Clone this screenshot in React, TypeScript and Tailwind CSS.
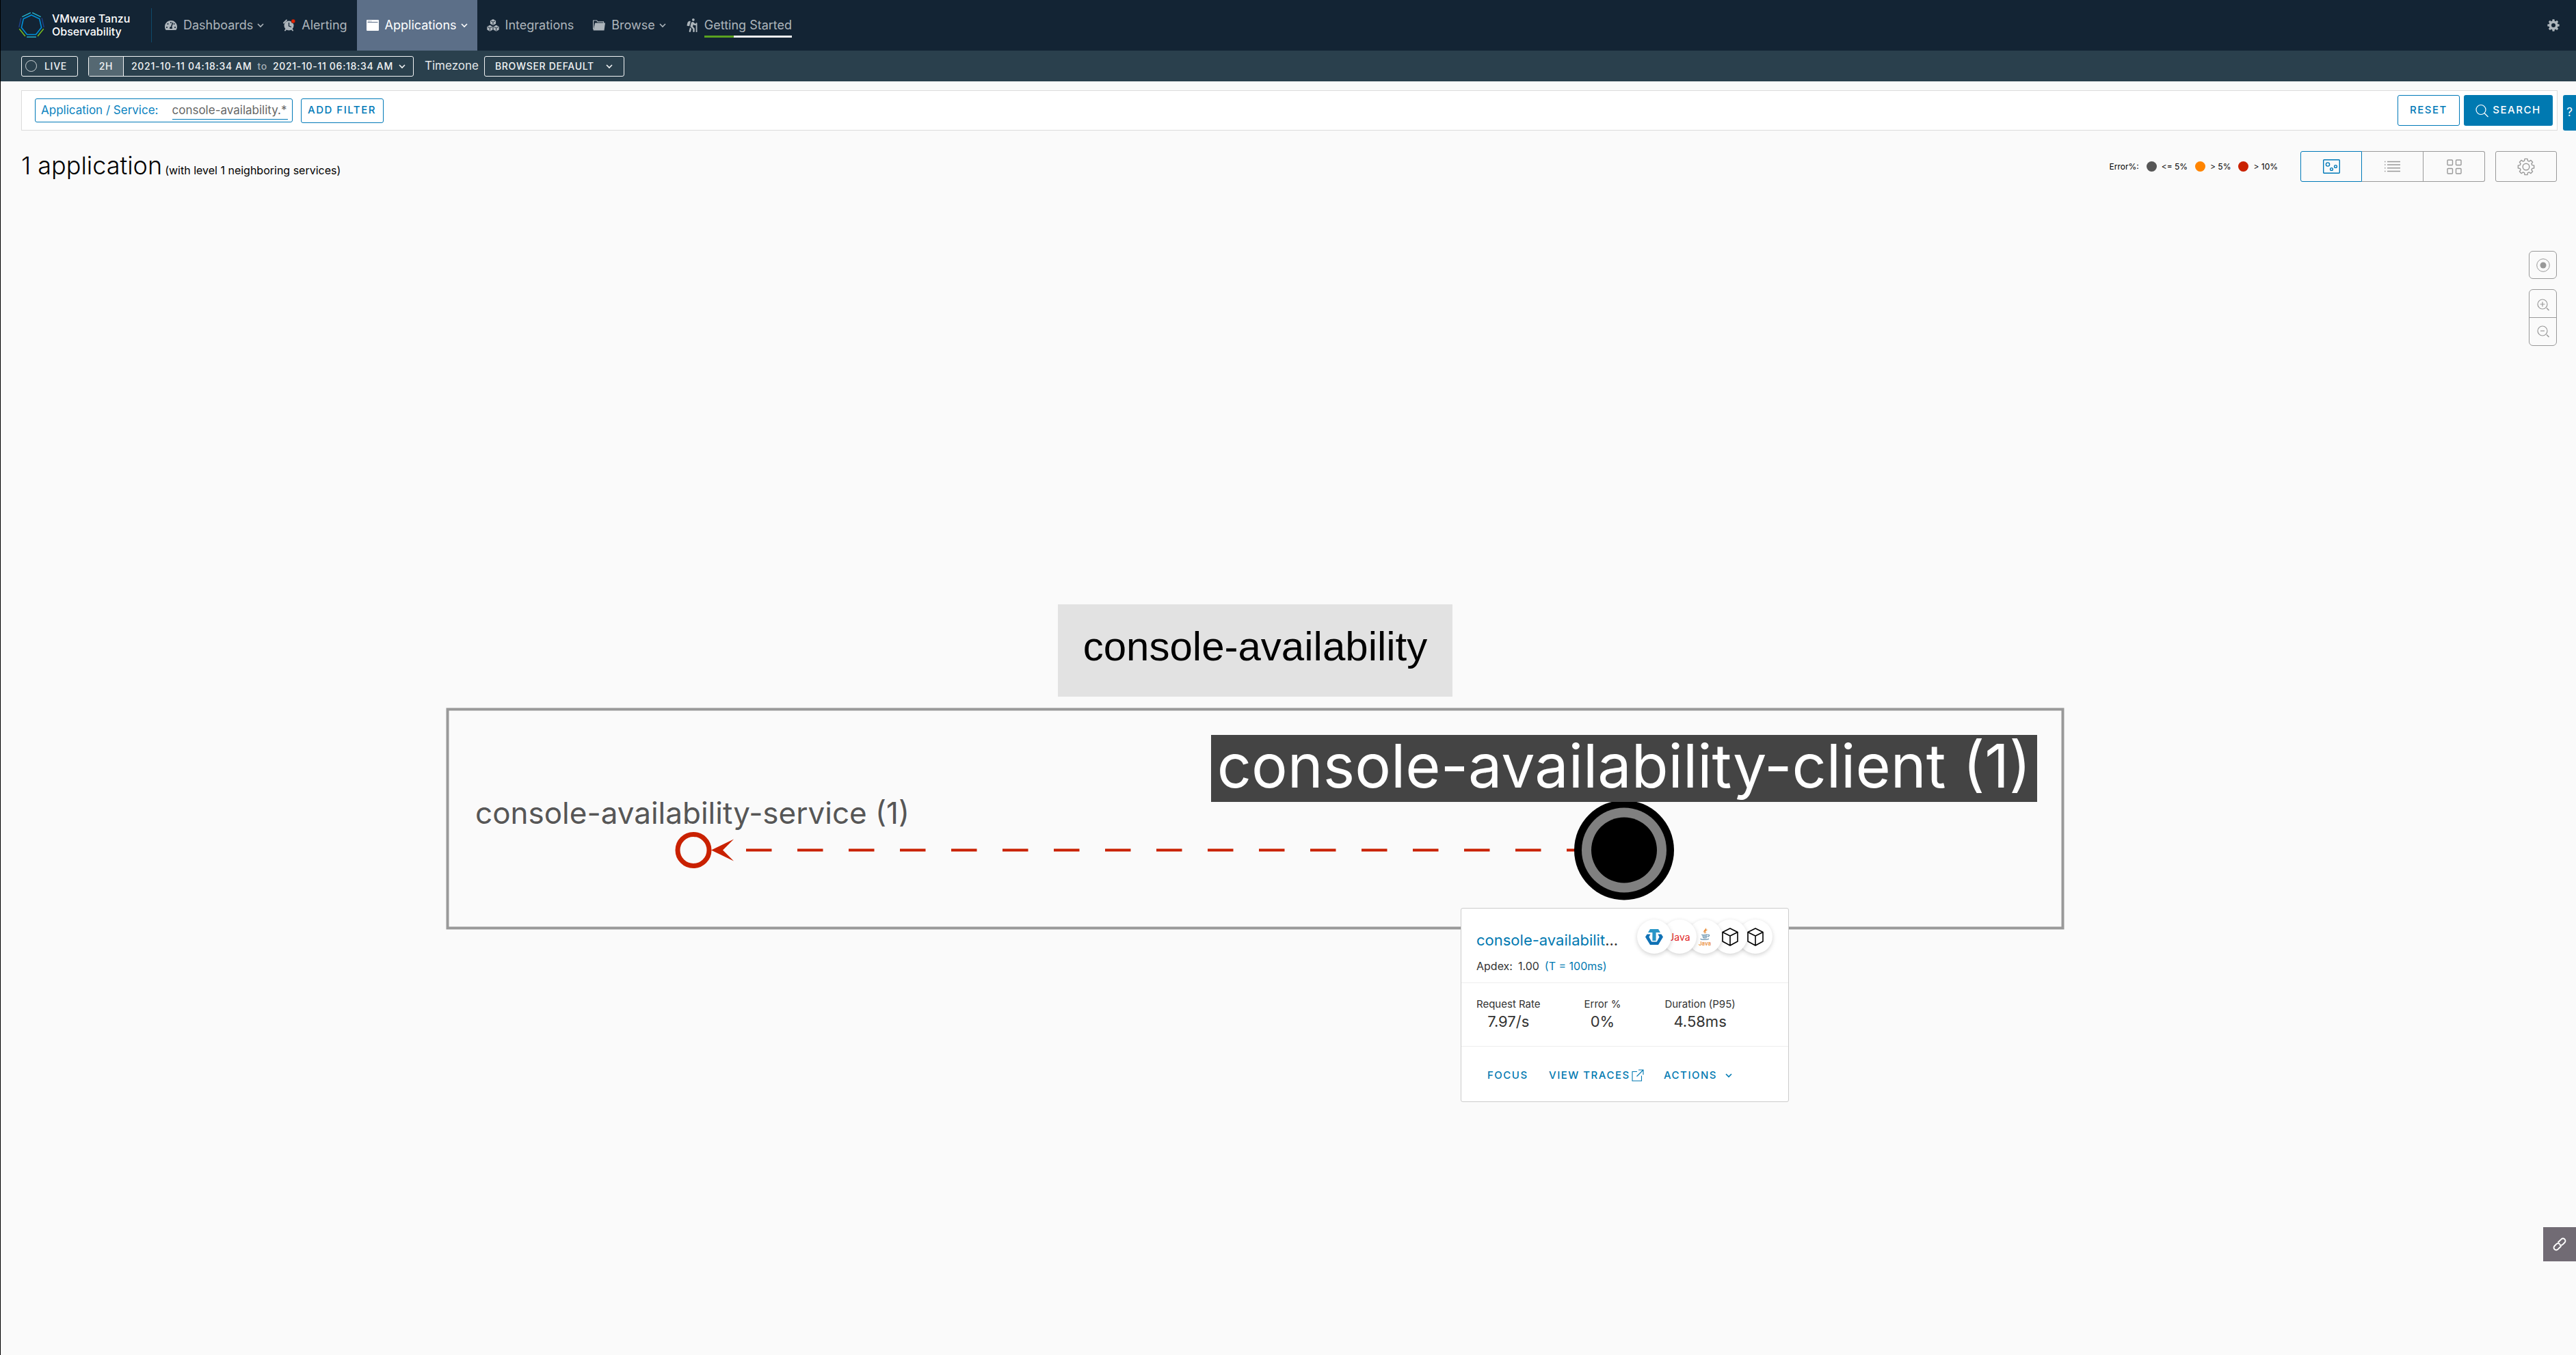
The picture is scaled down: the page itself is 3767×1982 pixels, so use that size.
import type { ReactNode } from "react";
import { FaTachometerAlt, FaHiking } from "react-icons/fa";

function gearPath(c: number, outer: number, inner: number): string {
  const pts: string[] = [];
  for (let i = 0; i < 8; i++) {
    const a = (i * Math.PI) / 4 - Math.PI / 2;
    const at = (r: number, d: number) =>
      `${(c + r * Math.cos(a + d)).toFixed(2)} ${(c + r * Math.sin(a + d)).toFixed(2)}`;
    pts.push(at(inner, -0.26), at(outer, -0.17), at(outer, 0.17), at(inner, 0.26));
  }
  return `M${pts.join("L")}Z`;
}

function heptagon(c: number, r: number): [number, number][] {
  return Array.from({ length: 7 }, (_, i) => {
    const a = (i * 2 * Math.PI) / 7 - Math.PI / 2;
    return [c + r * Math.cos(a), c + r * Math.sin(a)];
  });
}

function Chevron({ size = 10, className = "" }: { size?: number; className?: string }) {
  return (
    <svg width={size} height={size} viewBox="0 0 10 10" fill="none" stroke="currentColor" strokeWidth="1.6" className={className} aria-hidden="true">
      <path d="M1 3l4 4 4-4" />
    </svg>
  );
}

function BrandLogo() {
  const outer = heptagon(19, 19);
  const colors = ["#25b2cb", "#1d428a", "#78be20", "#25b2cb", "#78be20", "#1d428a", "#25b2cb"];
  return (
    <svg width="38" height="38" viewBox="0 0 38 38" fill="none" aria-hidden="true">
      {outer.map(([x, y], i) => {
        const [nx, ny] = outer[(i + 1) % 7];
        const t = 0.08;
        return (
          <line key={i} x1={x + (nx - x) * t} y1={y + (ny - y) * t} x2={nx - (nx - x) * t} y2={ny - (ny - y) * t} stroke={colors[i]} strokeWidth="1.5" />
        );
      })}
      <polygon points={heptagon(19, 15).map((p) => p.join(",")).join(" ")} stroke="#0091da" strokeWidth="1.6" />
    </svg>
  );
}

function AlarmIcon() {
  return (
    <svg width="18" height="18" viewBox="0 0 18 18" aria-hidden="true">
      <circle cx="8.5" cy="9.5" r="7" fill="currentColor" />
      <path d="M1 5.5L5 1.5M3 16.5l1.5-2M14 16.5l-1.5-2" stroke="currentColor" strokeWidth="2" strokeLinecap="round" />
      <path d="M8.5 5v5l3.5 1.5" stroke="#132434" strokeWidth="1.3" fill="none" />
      <circle cx="14.8" cy="3" r="3" fill="#e12200" stroke="#132434" strokeWidth="0.5" />
    </svg>
  );
}

function WindowIcon() {
  return (
    <svg width="18" height="16" viewBox="0 0 18 16" aria-hidden="true">
      <rect width="18" height="16" rx="1" fill="currentColor" />
      <path d="M1.5 3.5h15" stroke="#5c6f88" strokeWidth="1" />
      <path d="M2 1.8h5" stroke="#5c6f88" strokeWidth="1" strokeDasharray="1 1" />
    </svg>
  );
}

function CubesIcon() {
  const cube = "M0 2.2L4.1 0 8.2 2.2V6.8L4.1 9 0 6.8Z";
  const seams = "M1 2.7L4.1 4.3 7.2 2.7M4.1 4.3V8.2";
  return (
    <svg width="18" height="18" viewBox="0 0 18 18" aria-hidden="true">
      {["translate(4.9 0)", "translate(0.3 8.7)", "translate(9.5 8.7)"].map((t) => (
        <g key={t} transform={t}>
          <path d={cube} fill="currentColor" />
          <path d={seams} stroke="#132434" strokeWidth="0.9" fill="none" />
        </g>
      ))}
    </svg>
  );
}

function FolderIcon() {
  return (
    <svg width="18" height="16" viewBox="0 0 18 16" aria-hidden="true">
      <path d="M0.6 14V1h5l1.5 1.8h8.4V5" fill="none" stroke="currentColor" strokeWidth="1.2" />
      <path d="M3.2 4.5H18L16.5 15.5H0.6Z" fill="currentColor" />
    </svg>
  );
}

function SearchIcon() {
  return (
    <svg width="20" height="20" viewBox="0 0 20 20" fill="none" stroke="currentColor" strokeWidth="1.2" aria-hidden="true">
      <circle cx="8" cy="8.5" r="7" />
      <path d="M13 13.5l5.5 5.5" />
    </svg>
  );
}

function ZoomIcon({ plus }: { plus?: boolean }) {
  return (
    <svg width="18" height="18" viewBox="0 0 18 18" fill="none" stroke="currentColor" strokeWidth="1.2" aria-hidden="true">
      <circle cx="8" cy="8" r="7" />
      <path d={plus ? "M4.5 8h7M8 4.5v7" : "M5 8h6"} />
      <path d="M14 13.5l3.5 3.5" strokeWidth="1.5" />
    </svg>
  );
}

function CubeIcon() {
  return (
    <svg width="24" height="27" viewBox="0 0 24 27" fill="none" stroke="#000" strokeWidth="1.6" strokeLinejoin="round" aria-hidden="true">
      <path d="M12 1L23 6.5V20L12 26 1 20V6.5ZM1 6.5L12 12 23 6.5M12 12V26" />
    </svg>
  );
}

function TanzuIcon() {
  return (
    <svg width="26" height="23" viewBox="0 0 26 23" aria-hidden="true">
      <path d="M2.6 7.4H7.6L5.4 11.5 9.2 18.6H16.8L20.6 11.5 18.4 7.4H23.4L26 11.5 19 23H7L0 11.5Z" fill="#0f71b5" />
      <path d="M7 0H19L22 5H15.6V17H10.4V5H4Z" fill="#2a96c7" />
    </svg>
  );
}

function JavaCupIcon() {
  return (
    <div className="flex flex-col items-center">
      <svg width="16" height="20" viewBox="0 0 16 20" fill="none" aria-hidden="true">
        <path d="M9 0.5C11 3 5 5 6.5 7.5L8.5 10.5C8 7.5 6.5 7 9 5S9.5 2 9 0.5Z" fill="#e8852b" />
        <path d="M11.5 4C8.5 5 8 6.5 9.5 9" stroke="#e8852b" strokeWidth="1.1" />
        <path d="M4 11C2.5 12 10 12.3 12 11M4.5 13.3C5 14.3 10 14.3 11.5 13.3M5 15.5C6 16.3 9.5 16.3 11 15.5M12.5 11.3C15.5 10.8 15 13.5 12 14.3M2.5 17C0 18.5 10 19.5 14 17.2" stroke="#5382a1" strokeWidth="1.1" />
      </svg>
      <span className="text-[8px] leading-[8px] font-medium text-[#e8852b]">Java</span>
    </div>
  );
}

function LinkIcon() {
  return (
    <svg width="22" height="22" viewBox="0 0 22 22" fill="none" stroke="currentColor" strokeWidth="1.9" aria-hidden="true">
      <g transform="rotate(-45 11 11)">
        <path d="M11 14.5H4a3.5 3.5 0 0 1-3.5-3.5 3.5 3.5 0 0 1 3.5-3.5H8a3.5 3.5 0 0 1 3.5 3.5" />
        <path d="M11 7.5H18a3.5 3.5 0 0 1 3.5 3.5 3.5 3.5 0 0 1-3.5 3.5H14a3.5 3.5 0 0 1-3.5-3.5" />
      </g>
    </svg>
  );
}

function NavItem({ icon, label, menu, active }: { icon: ReactNode; label: string; menu?: boolean; active?: boolean }) {
  return (
    <a href="#" aria-current={active ? "page" : undefined} className={`flex h-full items-center px-3.5 ${active ? "bg-[#5c6f88] text-white" : "text-[#adb5bb]"}`}>
      <span className="flex w-[27px] items-center">{icon}</span>
      <span>{label}</span>
      {menu && <Chevron className="ml-1.5" />}
    </a>
  );
}

function LegendItem({ dot, label }: { dot: string; label: string }) {
  return (
    <li className="flex items-center gap-[7px]">
      <span className={`size-[15px] rounded-full ${dot}`} />
      {label}
    </li>
  );
}

function Badge({ children, order }: { children: ReactNode; order: string }) {
  return (
    <li className={`relative -mr-[13px] flex size-[50px] items-center justify-center rounded-full bg-white shadow-[0_2px_6px_rgba(0,0,0,0.18)] ${order}`}>
      {children}
    </li>
  );
}

function Stat({ label, value }: { label: string; value: string }) {
  return (
    <div className="flex flex-col items-center">
      <dt className="text-[15px] leading-5">{label}</dt>
      <dd className="text-[22px] leading-[30px]">{value}</dd>
    </div>
  );
}

function NavBar() {
  return (
    <header className="flex h-[74px] items-center bg-[#132434]">
      <a href="#" className="flex items-center gap-[11px] pl-[26px]">
        <BrandLogo />
        <span className="w-[145px] text-[16px] leading-[19px] font-medium text-white">
          VMware Tanzu
          <br />
          Observability
        </span>
      </a>
      <div className="mr-[5px] h-[50px] w-px bg-[#0f4a6b]" />
      <nav className="flex h-full flex-1 items-center text-[18px] leading-6">
        <NavItem icon={<FaTachometerAlt size={18} />} label="Dashboards" menu />
        <NavItem icon={<AlarmIcon />} label="Alerting" />
        <NavItem icon={<WindowIcon />} label="Applications" menu active />
        <NavItem icon={<CubesIcon />} label="Integrations" />
        <NavItem icon={<FolderIcon />} label="Browse" menu />
        <a href="#" className="flex h-full items-center px-3.5 text-[#adb5bb]">
          <span className="flex w-7 items-center">
            <FaHiking size={20} />
          </span>
          <span className="flex flex-col gap-[3px] pt-1.5">
            Getting Started
            <span role="progressbar" aria-label="Getting started progress" aria-valuenow={33} className="flex h-[3px] bg-[#f2f2f2]">
              <span className="w-1/3 bg-[#5aa220]" />
            </span>
          </span>
        </a>
      </nav>
      <button aria-label="Settings" className="mr-6 text-[#adb5bb]">
        <svg width="18" height="18" viewBox="0 0 18 18" aria-hidden="true">
          <path d={gearPath(9, 8.8, 6.6)} fill="currentColor" />
          <circle cx="9" cy="9" r="3" fill="#132434" />
        </svg>
      </button>
    </header>
  );
}

function TimeBar() {
  return (
    <div className="flex h-[45px] items-center bg-[#2a404d] pl-[30px] text-[14px] font-medium text-[#f2f4f5]">
      <button className="flex h-[30px] w-[83px] items-center gap-[11px] rounded-[3px] border border-[#f2f4f5] pl-[5px] tracking-wider">
        <span className="size-[17px] rounded-full border border-[#d0d6d9]" />
        LIVE
      </button>
      <button className="ml-[15px] flex h-[30px] w-[476px] items-stretch rounded-[3px] border border-[#f2f4f5] tracking-wider">
        <span className="flex w-[51px] items-center justify-center border-r border-[#f2f4f5] bg-[#556872]">2H</span>
        <span className="flex flex-1 items-center justify-center gap-2">
          2021-10-11 04:18:34 AM
          <span className="text-[#a5b0b6]">to</span>
          2021-10-11 06:18:34 AM
          <Chevron />
        </span>
      </button>
      <label htmlFor="timezone" className="mr-2 ml-4 text-[17px] font-normal text-[#e3e7e9]">
        Timezone
      </label>
      <div className="grid h-[30px] w-[205px] items-center rounded-[3px] border border-[#f2f4f5]">
        <select id="timezone" className="col-start-1 row-start-1 h-7 w-full appearance-none bg-transparent pl-[15px] tracking-wider text-inherit">
          <option>BROWSER DEFAULT</option>
        </select>
        <Chevron className="pointer-events-none col-start-1 row-start-1 mr-4 justify-self-end" />
      </div>
    </div>
  );
}

function FilterBar() {
  return (
    <div className="flex items-start pt-[13px] pl-[30px]">
      <form className="flex h-[59px] flex-1 items-center border border-[#dcdcdc] bg-white pr-1.5 pl-[19px] text-[17px]">
        <div className="flex h-[35px] items-center rounded-[3px] border border-[#0079b8] pr-[6px] pl-2">
          <label htmlFor="service" className="text-[#0b83c0]">
            Application / Service:
          </label>
          <input id="service" defaultValue="console-availability.*" className="ml-5 h-[26px] w-[169px] border-b border-[#0079b8] text-[#666]" />
        </div>
        <button type="button" className="ml-3 h-9 w-[121px] rounded-[3px] border border-[#0079b8] text-[15px] font-medium tracking-widest text-[#0079b8]">
          ADD FILTER
        </button>
        <button type="reset" className="ml-auto h-[45px] w-[91px] rounded-[3px] border border-[#0079b8] text-[15px] font-medium tracking-widest text-[#0079b8]">
          RESET
        </button>
        <button type="submit" className="ml-1.5 flex h-[45px] w-[130px] items-center justify-center gap-[5px] rounded-[3px] bg-[#0079b1] text-[15px] font-medium tracking-widest text-white">
          <SearchIcon />
          SEARCH
        </button>
      </form>
      <button aria-label="Help" className="mt-[7px] ml-2 h-[52px] w-[19px] rounded-l-[3px] bg-[#0079b1] text-center text-[17px] text-white">
        ?
      </button>
    </div>
  );
}

function Toolbar() {
  return (
    <div className="mt-[30px] flex h-[45px] items-center pr-7 pl-[30px]">
      <h1 className="flex items-baseline gap-1 pt-1 text-[36px] leading-11 font-light text-black">
        1 application
        <small className="text-[16px] font-normal">(with level 1 neighboring services)</small>
      </h1>
      <ul className="ml-auto flex items-center gap-[11px] text-[12px] text-black">
        <li>Error%:</li>
        <LegendItem dot="bg-[#565656]" label="<= 5%" />
        <LegendItem dot="bg-[#ff8400]" label="> 5%" />
        <LegendItem dot="bg-[#c92100]" label="> 10%" />
      </ul>
      <div className="ml-[33px] flex h-[45px] text-[#999]">
        <button aria-label="Map view" aria-pressed="true" className="flex w-[90px] items-center justify-center rounded-l-[3px] border border-[#0079b8] text-[#0079b8]">
          <svg width="25" height="21" viewBox="0 0 25 21" fill="none" stroke="currentColor" strokeWidth="1.4" aria-hidden="true">
            <rect x="0.7" y="0.7" width="23.6" height="19.6" rx="1" />
            <circle cx="7" cy="7.5" r="2.6" />
            <circle cx="12.5" cy="14.5" r="1.9" />
            <circle cx="18.5" cy="10.5" r="1.9" />
          </svg>
        </button>
        <button aria-label="List view" className="flex w-[90px] items-center justify-center border-y border-r border-[#999]">
          <svg width="23" height="17" viewBox="0 0 23 17" stroke="currentColor" strokeWidth="1.5" aria-hidden="true">
            <path d="M0 1.5h1.5M4 1.5h19M0 6.1h1.5M4 6.1h19M0 10.8h1.5M4 10.8h19M0 15.5h1.5M4 15.5h19" />
          </svg>
        </button>
        <button aria-label="Grid view" className="flex w-[90px] items-center justify-center rounded-r-[3px] border-y border-r border-[#999]">
          <svg width="22" height="22" viewBox="0 0 22 22" fill="none" stroke="currentColor" strokeWidth="1.4" aria-hidden="true">
            <rect x="1" y="1" width="7.5" height="7.5" rx="1" />
            <rect x="13.5" y="1" width="7.5" height="7.5" rx="1" />
            <rect x="1" y="13.5" width="7.5" height="7.5" rx="1" />
            <rect x="13.5" y="13.5" width="7.5" height="7.5" rx="1" />
          </svg>
        </button>
      </div>
      <button aria-label="View settings" className="ml-[15px] flex h-[45px] w-[90px] items-center justify-center rounded-[3px] border border-[#999] text-[#999]">
        <svg width="26" height="26" viewBox="0 0 26 26" fill="none" stroke="currentColor" strokeWidth="1.4" strokeLinejoin="round" aria-hidden="true">
          <path d={gearPath(13, 11.8, 9.2)} />
          <circle cx="13" cy="13" r="4.8" />
        </svg>
      </button>
    </div>
  );
}

function ServiceCard() {
  return (
    <article className="absolute top-[1062px] left-[2135px] w-[480px] rounded-[3px] border border-[#ccc] bg-white text-[#333]">
      <div className="flex h-[109px] justify-between border-b border-[#eee] pt-4 pr-9 pl-[22px]">
        <div className="pt-4">
          <h2 className="text-[22px] leading-7 whitespace-nowrap">
            <a href="#" className="text-[#0079b1]">
              console-availabilit
            </a>
            ...
          </h2>
          <p className="flex gap-2 pt-3 text-[16px] leading-6">
            <span>Apdex:</span>
            <span>1.00</span>
            <a href="#" className="text-[#0079b1]">
              (T = 100ms)
            </a>
          </p>
        </div>
        <ul className="flex">
          <Badge order="z-50"><TanzuIcon /></Badge>
          <Badge order="z-40"><span className="text-[14px] text-[#e11f26]">Java</span></Badge>
          <Badge order="z-30"><JavaCupIcon /></Badge>
          <Badge order="z-20"><CubeIcon /></Badge>
          <Badge order="z-10"><CubeIcon /></Badge>
        </ul>
      </div>
      <dl className="flex h-[93px] gap-16 border-b border-[#eee] pt-[21px] pl-[22px]">
        <Stat label="Request Rate" value="7.97/s" />
        <Stat label="Error %" value="0%" />
        <Stat label="Duration (P95)" value="4.58ms" />
      </dl>
      <div className="flex h-20 items-center pl-[38px] text-[15px] font-medium text-[#0079b1]">
        <button className="w-[90px] pt-1 text-left tracking-widest">FOCUS</button>
        <button className="flex w-[168px] items-center gap-0.5 pt-1 tracking-widest">
          VIEW TRACES
          <svg width="18" height="18" viewBox="0 0 18 18" fill="none" stroke="currentColor" strokeWidth="1.1" aria-hidden="true">
            <path d="M8 3.5H1V17H14.5V9.5M10 1H17V8M17 1L7.5 10.5" />
          </svg>
        </button>
        <button className="flex items-center gap-3 pt-1 tracking-widest">
          ACTIONS
          <Chevron />
        </button>
      </div>
    </article>
  );
}

function TopologyMap() {
  return (
    <main className="relative min-h-[1716px] flex-1 overflow-hidden">
      <div className="absolute top-[618px] left-[1546px] flex h-[135px] w-[577px] items-center justify-center bg-[#e2e2e2] pb-3 font-['Liberation_Sans',sans-serif] text-[60px] text-black">
        console-availability
      </div>
      <svg width="2370" height="330" viewBox="0 0 2370 330" fill="none" className="absolute top-[768px] left-[650px]" aria-hidden="true">
        <rect x="3.5" y="3.5" width="2362" height="320" stroke="#999" strokeWidth="4" />
        <path d="M440 209.5H1660" stroke="#c92100" strokeWidth="4" strokeDasharray="37.5 37.5" />
        <path d="M389 209.5L422 193.5 406 209.5 422 225.5Z" fill="#c92100" />
        <circle cx="363" cy="209.5" r="23" stroke="#c92100" strokeWidth="7" />
        <circle cx="1724" cy="209.5" r="73" fill="#000" />
        <circle cx="1724" cy="209.5" r="62" fill="#808080" />
        <circle cx="1724" cy="209.5" r="48" fill="#000" />
      </svg>
      <div className="absolute top-[893px] left-[694px] text-[44px] leading-[60px] text-[#565656]">console-availability-service (1)</div>
      <div className="absolute top-[809px] left-[1770px] flex h-[98px] w-[1208px] items-center justify-center bg-[#444] pb-2 text-[88px] leading-none whitespace-nowrap text-white">
        console-availability-client (1)
      </div>
      <ServiceCard />
      <div className="absolute top-[101px] right-7 flex flex-col gap-[15px] text-[#999]">
        <button aria-label="Center map" className="flex size-[41px] items-center justify-center rounded-[6px] border border-[#999]">
          <svg width="20" height="20" viewBox="0 0 20 20" aria-hidden="true">
            <circle cx="10" cy="10" r="9.3" fill="none" stroke="currentColor" />
            <circle cx="10" cy="10" r="4.5" fill="currentColor" />
          </svg>
        </button>
        <div className="flex flex-col rounded-[6px] border border-[#999]">
          <button aria-label="Zoom in" className="flex h-[41px] w-[39px] items-center justify-center border-b border-[#999] pt-1">
            <ZoomIcon plus />
          </button>
          <button aria-label="Zoom out" className="flex h-10 w-[39px] items-center justify-center">
            <ZoomIcon />
          </button>
        </div>
      </div>
      <button aria-label="Copy link" className="absolute top-[1529px] right-0 flex h-[50px] w-12 items-center justify-center bg-[#716b74] text-white">
        <LinkIcon />
      </button>
    </main>
  );
}

export default function App() {
  return (
    <div className="flex min-h-screen flex-col border-l border-black bg-[#fafafa] font-['Inter',sans-serif]">
      <NavBar />
      <TimeBar />
      <FilterBar />
      <Toolbar />
      <TopologyMap />
    </div>
  );
}
